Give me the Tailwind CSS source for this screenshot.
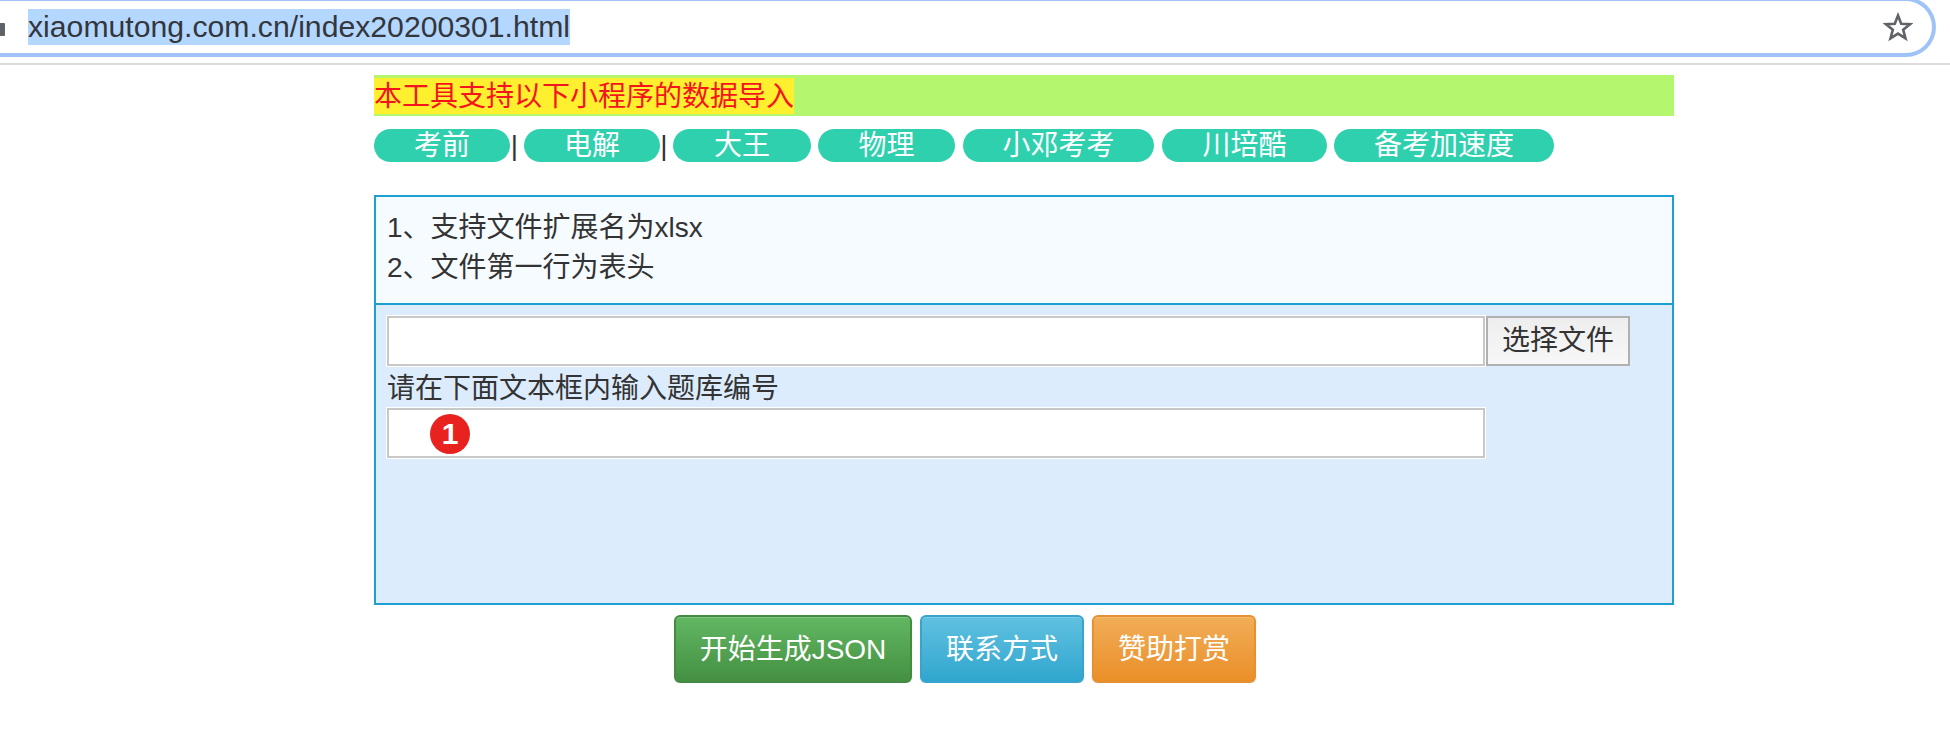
<!DOCTYPE html>
<html lang="zh-CN">
<head>
    <meta charset="UTF-8">
    <title>xiaomutong.com.cn/index20200301.html</title>
    <script src="https://cdn.jsdelivr.net/npm/@tailwindcss/browser@4"></script>
</head>
<body class="bg-white font-['Liberation_Sans','Noto_Sans_CJK_SC',sans-serif] text-[28px] text-[#333]">
    <!-- browser address bar -->
    <div class="h-[65px] border-b-2 border-[#dcdcdc] overflow-hidden">
        <div class="flex items-center -mt-[3px] w-[1936px] h-[60px] border-4 border-l-0 border-[#a0c3f7] rounded-r-[30px] relative">
            <div class="w-[5px] h-[13px] mt-[4px] bg-[#5f6368] rounded-r-[1px]"></div>
            <span class="ml-[23px] bg-[#b3d7ff] text-[#33363a] text-[30.2px] leading-[36px]">xiaomutong.com.cn/index20200301.html</span>
            <svg class="ml-auto mr-[19px]" width="30" height="30" viewBox="0 0 30 30" fill="none" stroke="#5f6368" stroke-width="2.6">
                <path d="M15 3.5l3.2 8.2 8.8.5-6.8 5.6 2.3 8.6-7.5-4.8-7.5 4.8 2.3-8.6L3 12.2l8.8-.5z"/>
            </svg>
        </div>
    </div>

    <div class="ml-[374px] w-[1300px] pt-[10px]">
        <!-- notice -->
        <div class="h-[41px] flex items-center bg-[#b4f66e]">
            <span class="bg-[#fff02f] text-[#f5141e] leading-[35px] pt-[1px]">本工具支持以下小程序的数据导入</span>
        </div>

        <!-- mini program pills -->
        <div class="flex items-center mt-[13px] h-[33px] text-white text-center leading-[33px]">
            <a class="w-[136px] rounded-full bg-[#2fd0ae]">考前</a>
            <span class="w-[14px] pr-[5px] text-[#333] leading-[33px]">|</span>
            <a class="w-[136px] rounded-full bg-[#2fd0ae]">电解</a>
            <span class="w-[13px] pr-[5px] text-[#333] leading-[33px]">|</span>
            <a class="w-[138px] rounded-full bg-[#2fd0ae]">大王</a>
            <a class="w-[137px] ml-[7px] rounded-full bg-[#2fd0ae]">物理</a>
            <a class="w-[191px] ml-[8px] rounded-full bg-[#2fd0ae]">小邓考考</a>
            <a class="w-[165px] ml-[8px] rounded-full bg-[#2fd0ae]">川培酷</a>
            <a class="w-[220px] ml-[7px] rounded-full bg-[#2fd0ae]">备考加速度</a>
        </div>

        <!-- upload box -->
        <div class="mt-[33px] h-[410px] border-2 border-[#1d9fd0] flex flex-col">
            <div class="h-[108px] px-[11px] pt-[11px] leading-[40px] bg-[#f5fbff] border-b-2 border-[#1d9fd0]">
                <p>1、支持文件扩展名为xlsx</p>
                <p>2、文件第一行为表头</p>
            </div>
            <div class="flex-1 bg-[#dcecfc] px-[11px] pt-[11px]">
                <div class="flex items-start">
                    <div class="w-[1098px] h-[50px] bg-white border-2 border-[#c8c8c8] ring-1 ring-white"></div>
                    <button class="ml-[1px] w-[144px] h-[50px] border-2 border-[#b0b0b0] bg-linear-to-b from-[#eeeeee] to-[#f7f7f7] text-[#333]">选择文件</button>
                </div>
                <p class="h-[42px] leading-[46px]">请在下面文本框内输入题库编号</p>
                <div class="relative w-[1098px] h-[50px] bg-white border-2 border-[#c8c8c8] ring-1 ring-white">
                    <span class="absolute left-[41px] top-[4px] w-[40px] h-[40px] rounded-full bg-[#e8231f] text-white text-center font-bold text-[30px] leading-[40px]">1</span>
                </div>
            </div>
        </div>

        <!-- actions -->
        <div class="flex mt-[10px] ml-[300px] gap-[8px] h-[68px] text-white leading-[64px] text-center [text-shadow:0_-1px_0_rgba(0,0,0,0.25)]">
            <button class="w-[238px] pt-[1px] rounded-[6px] border-2 border-[#448b42] bg-linear-to-b from-[#62b762] to-[#449042] shadow-[inset_0_1px_0_rgba(255,255,255,0.2),0_1px_2px_rgba(0,0,0,0.1)]">开始生成JSON</button>
            <button class="w-[164px] pt-[1px] rounded-[6px] border-2 border-[#38a3cc] bg-linear-to-b from-[#5fc1e0] to-[#2fa6cf] shadow-[inset_0_1px_0_rgba(255,255,255,0.2),0_1px_2px_rgba(0,0,0,0.1)]">联系方式</button>
            <button class="w-[164px] pt-[1px] rounded-[6px] border-2 border-[#e59133] bg-linear-to-b from-[#f1ad55] to-[#ea8f27] shadow-[inset_0_1px_0_rgba(255,255,255,0.2),0_1px_2px_rgba(0,0,0,0.1)]">赞助打赏</button>
        </div>
    </div>
</body>
</html>
